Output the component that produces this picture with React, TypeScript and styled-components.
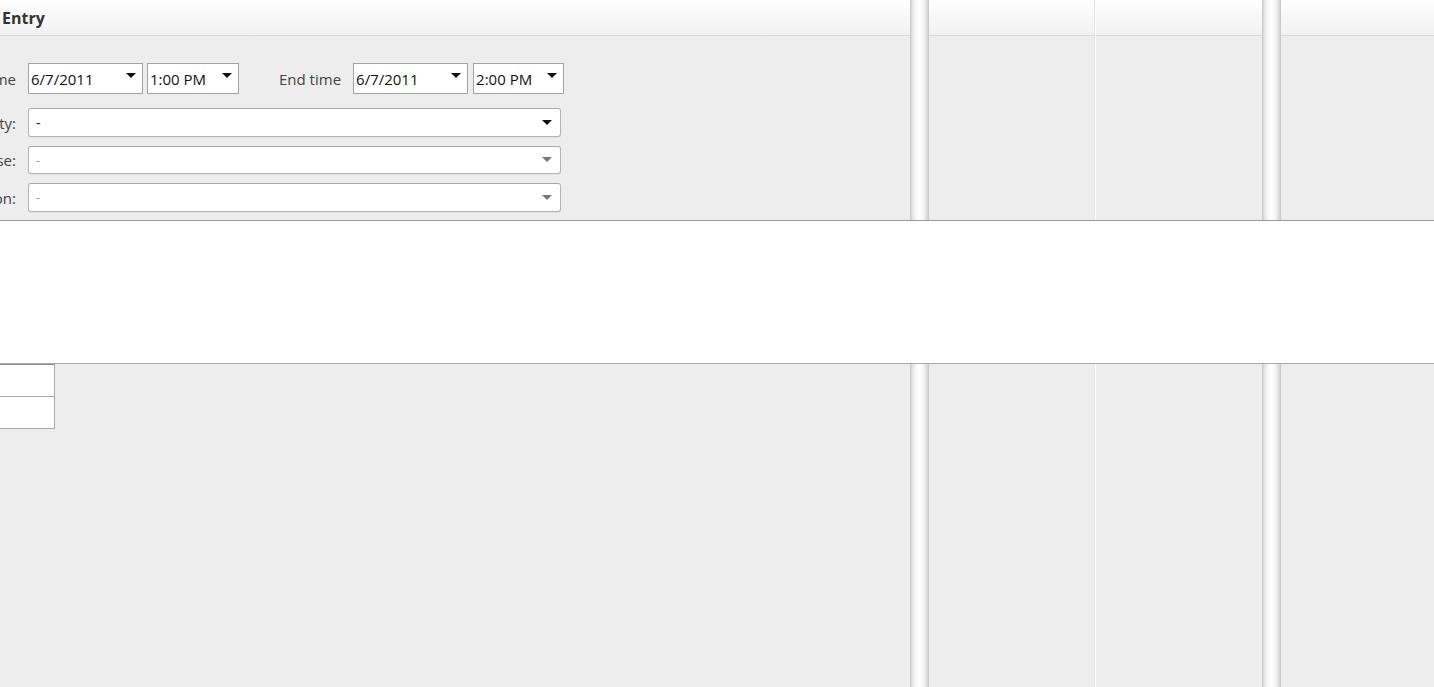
import React from "react";
import styled, { createGlobalStyle } from "styled-components";

const Global = createGlobalStyle`
  html, body { margin: 0; padding: 0; background: #ededed; overflow: hidden; }
  body { font-family: "Open Sans", "Noto Sans", sans-serif; }
  * { box-sizing: border-box; }
`;

const Page = styled.div`
  width: 1434px;
  height: 687px;
  display: flex;
  flex-direction: column;
  overflow: hidden;
  background: #ededed;
`;

const Row = styled.div<{ $top?: boolean }>`
  display: flex;
  flex: ${(p) => (p.$top ? "0 0 221px" : "1 1 auto")};
  border-bottom: ${(p) => (p.$top ? "1px solid #9a9a9a" : "none")};
  min-height: 0;
`;

const Panel = styled.div<{ $w?: number }>`
  flex: ${(p) => (p.$w ? `0 0 ${p.$w}px` : "1 1 auto")};
  display: flex;
  flex-direction: column;
  overflow: hidden;
  min-width: 0;
`;

const Header = styled.div`
  flex: 0 0 36px;
  height: 36px;
  display: flex;
  align-items: center;
  padding-left: 2px;
  background: linear-gradient(to bottom, #ffffff 0%, #f8f8f8 50%, #f1f1f1 100%);
  border-bottom: 1px solid #dadada;
  font-size: 16px;
  font-weight: 700;
  color: #333;
`;

const Splitter = styled.div`
  flex: 0 0 19px;
  background: linear-gradient(
    to right,
    #c8c8c8 0%,
    #e6e6e6 14%,
    #f8f8f8 32%,
    #ffffff 52%,
    #f3f3f3 72%,
    #dcdcdc 88%,
    #c6c6c6 100%
  );
`;

const Divider = styled.div`
  flex: 0 0 2px;
  border-left: 1px solid #e2e2e2;
  background: #ffffff;
`;

const Form = styled.div`
  display: grid;
  grid-template-columns: 90px auto;
  column-gap: 12px;
  margin-left: -74px;
  padding-top: 27px;
  align-items: center;
`;

const Label = styled.div`
  justify-self: end;
  font-size: 15px;
  color: #444;
  white-space: nowrap;
`;

const InlineLabel = styled(Label)`
  margin: 0 12px 0 40px;
`;

const Line = styled.div<{ $gap: number }>`
  display: flex;
  align-items: center;
  margin-top: ${(p) => p.$gap}px;
`;

const LabelCell = styled.div<{ $gap: number }>`
  justify-self: end;
  margin-top: ${(p) => p.$gap}px;
  font-size: 15px;
  color: #444;
  white-space: nowrap;
`;

const Picker = styled.div<{ $w: number; $gap?: number }>`
  position: relative;
  width: ${(p) => p.$w}px;
  height: 31px;
  margin-left: ${(p) => p.$gap ?? 0}px;
  background: #fff;
  border: 1px solid #a3a3a3;
  display: flex;
  align-items: center;
  padding-left: 2px;
  font-size: 15px;
  color: #111;
`;

const Arrow = styled.span<{ $grey?: boolean; $top?: number }>`
  position: absolute;
  right: ${(p) => (p.$grey !== undefined ? 8 : 6)}px;
  top: ${(p) => p.$top ?? 10}px;
  width: 0;
  height: 0;
  border-left: 5px solid transparent;
  border-right: 5px solid transparent;
  border-top: 5px solid ${(p) => (p.$grey ? "#777" : "#111")};
`;

const Combo = styled.div<{ $h: number; $dim?: boolean }>`
  position: relative;
  width: 533px;
  height: ${(p) => p.$h}px;
  background: #fff;
  border: 1px solid #b4b4b4;
  border-top-color: #a9a9a9;
  border-radius: 3px;
  box-shadow: 0 1px 0 rgba(0, 0, 0, 0.04);
  display: flex;
  align-items: center;
  padding-left: 7px;
  font-size: ${(p) => (p.$dim ? 12 : 14)}px;
  color: ${(p) => (p.$dim ? "#999" : "#222")};
`;

const Band = styled.div`
  flex: 0 0 143px;
  background: #fff;
  border-bottom: 1px solid #ababab;
`;

const Cells = styled.div`
  display: flex;
  flex-direction: column;
  width: 55px;
`;

const Cell = styled.div<{ $first?: boolean }>`
  height: ${(p) => (p.$first ? 33 : 32)}px;
  background: #fff;
  border-right: 1px solid #a8a8a8;
  border-bottom: 1px solid #a8a8a8;
  border-top: ${(p) => (p.$first ? "1px solid #8e8e8e" : "none")};
`;

const combos = [
  { label: "Activity:", h: 29, gap: 14, dim: false },
  { label: "Purpose:", h: 28, gap: 9, dim: true },
  { label: "Location:", h: 29, gap: 9, dim: true },
];

function Columns({ top }: { top: boolean }) {
  return (
    <>
      <Splitter />
      <Panel $w={165}>{top && <Header />}</Panel>
      <Divider />
      <Panel $w={166}>{top && <Header />}</Panel>
      <Splitter />
      <Panel>{top && <Header />}</Panel>
    </>
  );
}

export default function App() {
  return (
    <Page>
      <Global />
      <Row $top>
        <Panel $w={910}>
          <Header>Entry</Header>
          <Form>
            <Label>Start time</Label>
            <Line $gap={0}>
              <Picker $w={115}>
                6/7/2011
                <Arrow $top={9} />
              </Picker>
              <Picker $w={92} $gap={4}>
                1:00 PM
                <Arrow $top={9} />
              </Picker>
              <InlineLabel>End time</InlineLabel>
              <Picker $w={115}>
                6/7/2011
                <Arrow $top={9} />
              </Picker>
              <Picker $w={91} $gap={5}>
                2:00 PM
                <Arrow $top={9} />
              </Picker>
            </Line>
            {combos.map((c) => (
              <React.Fragment key={c.label}>
                <LabelCell $gap={c.gap}>{c.label}</LabelCell>
                <Line $gap={c.gap}>
                  <Combo $h={c.h} $dim={c.dim}>
                    -
                    <Arrow $grey={c.dim} $top={c.h / 2 - 4} />
                  </Combo>
                </Line>
              </React.Fragment>
            ))}
          </Form>
        </Panel>
        <Columns top />
      </Row>
      <Band />
      <Row>
        <Panel $w={910}>
          <Cells>
            <Cell $first />
            <Cell />
          </Cells>
        </Panel>
        <Columns top={false} />
      </Row>
    </Page>
  );
}
